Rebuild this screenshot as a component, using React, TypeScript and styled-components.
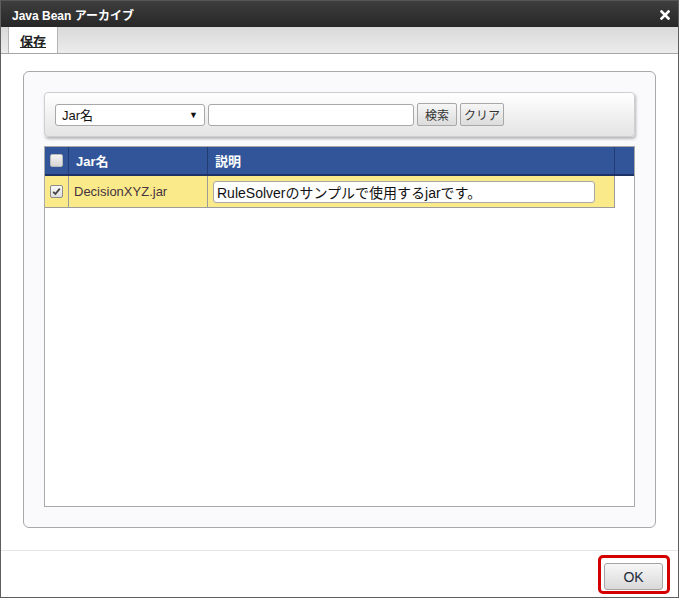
import React from "react";
import styled, { createGlobalStyle } from "styled-components";

const Global = createGlobalStyle`
  html, body { margin: 0; padding: 0; background: #fff; }
  body { font-family: "Liberation Sans", "Noto Sans CJK JP", sans-serif; }
  * { box-sizing: border-box; }
`;

const Window = styled.div`
  width: 679px;
  height: 598px;
  display: flex;
  flex-direction: column;
  border-left: 1px solid #5e5e5e;
  border-right: 1px solid #5e5e5e;
  border-bottom: 1px solid #5e5e5e;
  background: #fff;
`;

const TitleBar = styled.div`
  height: 27px;
  flex: none;
  display: flex;
  align-items: center;
  justify-content: space-between;
  padding: 0 8px 0 11px;
  background: linear-gradient(#3e3e3e, #272727);
  border-top: 1px solid #555;
`;

const Title = styled.span`
  color: #fff;
  font-weight: bold;
  font-size: 12px;
  font-family: "Liberation Sans", "Noto Sans CJK JP", sans-serif;
`;

const CloseIcon = styled.svg`
  width: 10px;
  height: 10px;
  margin-top: 1px;
`;

const Toolbar = styled.div`
  height: 27px;
  flex: none;
  display: flex;
  padding-left: 7px;
  background: linear-gradient(#d9d9d9, #ececec);
  border-bottom: 1px solid #a6a6a6;
`;

const Tab = styled.div`
  width: 50px;
  display: flex;
  align-items: center;
  justify-content: center;
  background: #fff;
  border-left: 1px solid #b4b4b4;
  border-right: 1px solid #b4b4b4;
  font-size: 13px;
  font-weight: bold;
  color: #222;
  text-decoration: underline;
  padding-top: 1px;
`;

const Content = styled.div`
  flex: 1;
  display: flex;
  flex-direction: column;
  padding: 17px 22px 22px 22px;
  min-height: 0;
`;

const Panel = styled.div`
  flex: 1;
  display: flex;
  flex-direction: column;
  gap: 9px;
  padding: 20px;
  background: #fafafc;
  border: 1px solid #a9a9a9;
  border-radius: 6px;
  min-height: 0;
`;

const SearchBox = styled.div`
  height: 45px;
  flex: none;
  display: flex;
  align-items: center;
  gap: 3px;
  padding: 0 10px;
  background: linear-gradient(#ffffff, #e4e4e4);
  border: 1px solid #cfcfcf;
  border-radius: 4px;
  box-shadow: 1px 2px 3px rgba(0, 0, 0, 0.28);
`;

const Select = styled.div`
  width: 150px;
  height: 22px;
  display: flex;
  align-items: center;
  justify-content: space-between;
  padding: 0 6px 0 6px;
  background: #fff;
  border: 1px solid #a8a8a8;
  border-radius: 3px;
  font-size: 13px;
  color: #111;
`;

const Arrow = styled.span`
  font-size: 9px;
  color: #111;
`;

const TextInput = styled.div<{ $w: number; $size?: number }>`
  width: ${(p) => p.$w}px;
  height: 22px;
  display: flex;
  align-items: center;
  padding: 0 3px;
  background: #fff;
  border: 1px solid #a8a8a8;
  border-radius: 3px;
  font-size: ${(p) => p.$size ?? 13}px;
  color: #111;
  white-space: nowrap;
  overflow: hidden;
`;

const Button = styled.div<{ $w: number }>`
  width: ${(p) => p.$w}px;
  height: 23px;
  display: flex;
  align-items: center;
  justify-content: center;
  background: linear-gradient(#f6f6f6, #dcdcdc);
  border: 1px solid #a8a8a8;
  border-radius: 2px;
  font-size: 12px;
  color: #333;
`;

const Table = styled.div`
  flex: 1;
  display: flex;
  flex-direction: column;
  background: #fff;
  border: 1px solid #a9a9a9;
  min-height: 0;
`;

const Cols = "24px 139px 407px";

const HeaderRow = styled.div`
  display: grid;
  grid-template-columns: ${Cols} 1fr;
  height: 29px;
  background: #32559a;
  border-bottom: 2px solid #1d3264;
`;

const HeadCell = styled.div<{ $center?: boolean }>`
  display: flex;
  align-items: center;
  justify-content: ${(p) => (p.$center ? "center" : "flex-start")};
  padding-left: ${(p) => (p.$center ? 0 : 7)}px;
  border-right: 1px solid #223d74;
  color: #fff;
  font-weight: bold;
  font-size: 13px;
  &:last-child { border-right: none; }
`;

const BodyRow = styled.div`
  display: grid;
  grid-template-columns: ${Cols};
  height: 32px;
  width: 570px;
`;

const Cell = styled.div<{ $center?: boolean }>`
  display: flex;
  align-items: center;
  justify-content: ${(p) => (p.$center ? "center" : "flex-start")};
  padding-left: ${(p) => (p.$center ? 0 : 5)}px;
  background: #faea8a;
  border-right: 1px solid #9c9c9c;
  border-bottom: 1px solid #9c9c9c;
  font-size: 13px;
  color: #46343f;
`;

const Check = styled.div<{ $on?: boolean }>`
  width: 13px;
  height: 13px;
  display: flex;
  align-items: center;
  justify-content: center;
  border: 1px solid ${(p) => (p.$on ? "#8a8a8a" : "#b9b9b9")};
  border-radius: 2px;
  background: ${(p) => (p.$on ? "linear-gradient(#fafafa, #dedede)" : "linear-gradient(#f4f4f4, #d6d6d6)")};
`;

const Footer = styled.div`
  height: 47px;
  flex: none;
  display: flex;
  justify-content: flex-end;
  align-items: flex-start;
  padding: 4px 8px 0 0;
  border-top: 1px solid #e6e6e6;
`;

const Highlight = styled.div`
  border: 3px solid #d40000;
  border-radius: 5px;
  padding: 5px 4px 1px 3px;
`;

const OkButton = styled.div`
  width: 59px;
  height: 27px;
  display: flex;
  align-items: center;
  justify-content: center;
  background: linear-gradient(#f7f7f7, #d9d9d9);
  border: 1px solid #a4a4a4;
  border-radius: 3px;
  font-size: 14px;
  color: #1c2a3a;
`;

export default function App() {
  return (
    <>
      <Global />
      <Window>
        <TitleBar>
          <Title>Java Bean アーカイブ</Title>
          <CloseIcon viewBox="0 0 10 10">
            <path d="M1.5 1.5 L8.5 8.5 M8.5 1.5 L1.5 8.5" stroke="#fff" strokeWidth="2.6" strokeLinecap="square" />
          </CloseIcon>
        </TitleBar>
        <Toolbar>
          <Tab>保存</Tab>
        </Toolbar>
        <Content>
          <Panel>
            <SearchBox>
              <Select>
                <span>Jar名</span>
                <Arrow>▼</Arrow>
              </Select>
              <TextInput $w={206} />
              <Button $w={40}>検索</Button>
              <Button $w={44}>クリア</Button>
            </SearchBox>
            <Table>
              <HeaderRow>
                <HeadCell $center>
                  <Check />
                </HeadCell>
                <HeadCell>Jar名</HeadCell>
                <HeadCell>説明</HeadCell>
                <HeadCell />
              </HeaderRow>
              <BodyRow>
                <Cell $center>
                  <Check $on>
                    <svg width="9" height="9" viewBox="0 0 9 9">
                      <path d="M1.2 4.8 L3.4 7 L7.8 1.6" stroke="#444" strokeWidth="1.8" fill="none" />
                    </svg>
                  </Check>
                </Cell>
                <Cell>DecisionXYZ.jar</Cell>
                <Cell>
                  <TextInput $w={382} $size={14}>RuleSolverのサンプルで使用するjarです。</TextInput>
                </Cell>
              </BodyRow>
            </Table>
          </Panel>
        </Content>
        <Footer>
          <Highlight>
            <OkButton>OK</OkButton>
          </Highlight>
        </Footer>
      </Window>
    </>
  );
}
